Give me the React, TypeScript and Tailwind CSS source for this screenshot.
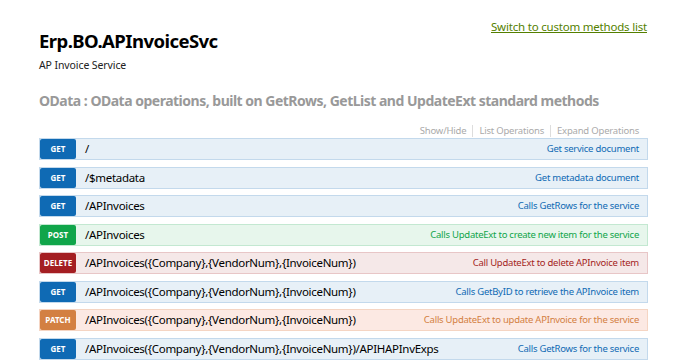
import React from "react";

type Op = { m: "GET" | "POST" | "DELETE" | "PATCH"; path: string; desc: string };

const ops: Op[] = [
  { m: "GET", path: "/", desc: "Get service document" },
  { m: "GET", path: "/$metadata", desc: "Get metadata document" },
  { m: "GET", path: "/APInvoices", desc: "Calls GetRows for the service" },
  { m: "POST", path: "/APInvoices", desc: "Calls UpdateExt to create new item for the service" },
  { m: "DELETE", path: "/APInvoices({Company},{VendorNum},{InvoiceNum})", desc: "Call UpdateExt to delete APInvoice item" },
  { m: "GET", path: "/APInvoices({Company},{VendorNum},{InvoiceNum})", desc: "Calls GetByID to retrieve the APInvoice item" },
  { m: "PATCH", path: "/APInvoices({Company},{VendorNum},{InvoiceNum})", desc: "Calls UpdateExt to update APInvoice for the service" },
  { m: "GET", path: "/APInvoices({Company},{VendorNum},{InvoiceNum})/APIHAPInvExps", desc: "Calls GetRows for the service" },
];

const styles = {
  GET: { row: "bg-[#e7f0f7] border-[#c3d9ec]", badge: "bg-[#0f6ab4]", text: "text-[#0f6ab4]" },
  POST: { row: "bg-[#e7f6ec] border-[#c3e8d1]", badge: "bg-[#10a54a]", text: "text-[#10a54a]" },
  DELETE: { row: "bg-[#f5e8e8] border-[#e8c6c7]", badge: "bg-[#a41e22]", text: "text-[#a41e22]" },
  PATCH: { row: "bg-[#fce9e3] border-[#f5d5c3]", badge: "bg-[#d38042]", text: "text-[#d38042]" },
};

export default function App() {
  return (
    <div className="w-[690px] h-[363px] overflow-hidden bg-white" style={{ fontFamily: '"Noto Sans", "Open Sans", sans-serif' }}>
      <div className="px-[39px] pt-[30px] relative">
        <a className="absolute right-[43px] top-[18px] text-[11.5px] tracking-[-0.2px] text-[#547f00] underline leading-[18px]">
          Switch to custom methods list
        </a>
        <h1 className="text-[18.5px] tracking-[-0.55px] font-bold text-black leading-[22px]">Erp.BO.APInvoiceSvc</h1>
        <div className="text-[10.5px] tracking-[-0.1px] text-[#222] leading-[14px] mt-[6px]">AP Invoice Service</div>
        <h2 className="text-[14px] tracking-[-0.5px] font-bold text-[#999] leading-[18px] mt-[20px] whitespace-nowrap">
          OData : OData operations, built on GetRows, GetList and UpdateExt standard methods
        </h2>
        <div className="w-[609px] flex justify-end text-[9.5px] tracking-[-0.2px] text-[#aaa] leading-[12px] mt-[15px] pr-[9px]">
          <span className="pr-[6px] border-r border-[#ddd]">Show/Hide</span>
          <span className="px-[6px] border-r border-[#ddd]">List Operations</span>
          <span className="pl-[6px]">Expand Operations</span>
        </div>
        <div className="mt-[1px] w-[609px] flex flex-col gap-[6.5px]">
          {ops.map((o, i) => {
            const s = styles[o.m];
            return (
              <div key={i} className={`flex items-stretch h-[22px] border ${s.row}`}>
                <div className={`w-[36px] flex items-center justify-center text-white text-[8px] font-bold rounded-[2px] ${s.badge}`}>
                  {o.m}
                </div>
                <div className="pl-[9px] text-[11.5px] tracking-[-0.3px] text-black leading-[20px] flex-1 whitespace-nowrap">{o.path}</div>
                <div className={`pr-[8px] text-[9.5px] tracking-[-0.25px] leading-[20px] whitespace-nowrap ${s.text}`}>{o.desc}</div>
              </div>
            );
          })}
        </div>
      </div>
    </div>
  );
}
